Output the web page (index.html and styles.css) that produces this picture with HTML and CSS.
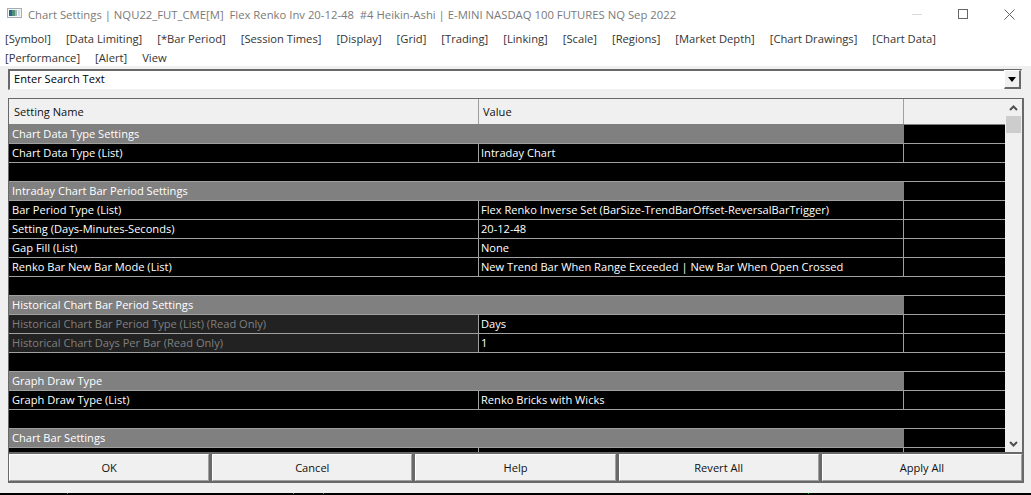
FILE: index.html
```html
<!DOCTYPE html>
<html lang="en">
<head>
<meta charset="utf-8">
<title>Chart Settings</title>
<link rel="stylesheet" href="styles.css">
</head>
<body>
<div class="window">
  <header class="titlebar">
    <svg class="app-icon" width="16" height="14" viewBox="0 0 16 14"><rect x="1.5" y="1.5" width="14" height="9" fill="#f4f6f7" stroke="#a3adb3"/><rect x="3" y="3" width="3" height="6" fill="#2f5f86"/><rect x="6" y="3" width="3" height="6" fill="#4f8f78"/><rect x="9" y="3" width="2" height="6" fill="#9ab8b4"/><rect x="12" y="3" width="2" height="6" fill="#d5dde2"/></svg>
    <span class="title">Chart Settings | NQU22_FUT_CME[M]&nbsp; Flex Renko Inv 20-12-48&nbsp; #4 Heikin-Ashi | E-MINI NASDAQ 100 FUTURES NQ Sep 2022</span>
    <div class="controls">
      <svg width="10" height="10" viewBox="0 0 10 10"><path d="M0 5.5H10" stroke="#dadada"/></svg>
      <svg width="10" height="10" viewBox="0 0 10 10"><rect x="0.5" y="0.5" width="9" height="9" fill="none" stroke="#666"/></svg>
      <svg width="11" height="11" viewBox="0 0 11 11"><path d="M0.5 0.5L10.5 10.5M10.5 0.5L0.5 10.5" stroke="#666"/></svg>
    </div>
  </header>
  <nav class="tabs">
    <span>[Symbol]</span><span>[Data Limiting]</span><span>[*Bar Period]</span><span>[Session Times]</span><span>[Display]</span><span>[Grid]</span><span>[Trading]</span><span>[Linking]</span><span>[Scale]</span><span>[Regions]</span><span>[Market Depth]</span><span>[Chart Drawings]</span><span>[Chart Data]</span><span>[Performance]</span><span>[Alert]</span><span>View</span>
  </nav>
  <main class="panel">
    <div class="search">
      <span class="search-text">Enter Search Text</span>
      <span class="drop"><svg width="8" height="5" viewBox="0 0 8 5"><path d="M0 0H8L4 5Z" fill="#000"/></svg></span>
    </div>
    <section class="gridbox">
      <div class="grid-main">
        <div class="head">
          <div class="hc c1">Setting Name</div><div class="hc c2">Value</div><div class="hc c3"></div>
        </div>
        <div class="rows">
          <div class="row group"><div class="g">Chart Data Type Settings</div><div class="c3"></div></div>
          <div class="row"><div class="c c1">Chart Data Type (List)</div><div class="c c2">Intraday Chart</div><div class="c3"></div></div>
          <div class="row"></div>
          <div class="row group"><div class="g">Intraday Chart Bar Period Settings</div><div class="c3"></div></div>
          <div class="row"><div class="c c1">Bar Period Type (List)</div><div class="c c2">Flex Renko Inverse Set (BarSize-TrendBarOffset-ReversalBarTrigger)</div><div class="c3"></div></div>
          <div class="row"><div class="c c1">Setting (Days-Minutes-Seconds)</div><div class="c c2">20-12-48</div><div class="c3"></div></div>
          <div class="row"><div class="c c1">Gap Fill (List)</div><div class="c c2">None</div><div class="c3"></div></div>
          <div class="row"><div class="c c1">Renko Bar New Bar Mode (List)</div><div class="c c2">New Trend Bar When Range Exceeded | New Bar When Open Crossed</div><div class="c3"></div></div>
          <div class="row"></div>
          <div class="row group"><div class="g">Historical Chart Bar Period Settings</div><div class="c3"></div></div>
          <div class="row"><div class="c c1 ro">Historical Chart Bar Period Type (List) (Read Only)</div><div class="c c2">Days</div><div class="c3"></div></div>
          <div class="row"><div class="c c1 ro">Historical Chart Days Per Bar (Read Only)</div><div class="c c2">1</div><div class="c3"></div></div>
          <div class="row"></div>
          <div class="row group"><div class="g">Graph Draw Type</div><div class="c3"></div></div>
          <div class="row"><div class="c c1">Graph Draw Type (List)</div><div class="c c2">Renko Bricks with Wicks</div><div class="c3"></div></div>
          <div class="row"></div>
          <div class="row group"><div class="g">Chart Bar Settings</div><div class="c3"></div></div>
          <div class="row"><div class="c c1"></div><div class="c c2"></div><div class="c3"></div></div>
        </div>
      </div>
      <div class="scroll">
        <svg width="9" height="6" viewBox="0 0 9 6"><path d="M1 5L4.5 1.5L8 5" fill="none" stroke="#505050" stroke-width="2"/></svg>
        <div class="thumb"></div>
        <div class="track"></div>
        <svg width="9" height="6" viewBox="0 0 9 6"><path d="M1 1L4.5 4.5L8 1" fill="none" stroke="#505050" stroke-width="2"/></svg>
      </div>
      <div class="buttons">
        <button>OK</button><button>Cancel</button><button>Help</button><button>Revert All</button><button>Apply All</button>
      </div>
    </section>
  </main>
  <footer class="strip"><i></i><i></i><i></i><i></i></footer>
</div>
</body>
</html>
```
FILE: styles.css
```css
* { box-sizing: border-box; }
html, body { margin: 0; padding: 0; }
body {
  width: 1031px;
  height: 495px;
  overflow: hidden;
  font-family: "Open Sans", "Noto Sans", sans-serif;
  font-size: 11.1px;
  color: #000;
}
.window { height: 495px; display: flex; flex-direction: column; background: #f0f0f0; }
.titlebar {
  height: 28px;
  background: #fff;
  display: flex;
  align-items: center;
  padding-left: 6px;
  flex: none;
}
.app-icon { flex: none; }
.title { margin-left: 6px; color: #7a7a7a; white-space: nowrap; font-size: 11.3px; }
.controls { margin-left: auto; display: flex; align-items: center; gap: 36px; padding-right: 16px; }
.tabs {
  background: #fff;
  height: 38px;
  flex: none;
  padding: 1px 40px 0 5px;
  display: flex;
  flex-wrap: wrap;
  column-gap: 15.05px;
  line-height: 19px;
  font-size: 11.2px;
  color: #333;
  align-content: flex-start;
}
.panel { flex: 1; display: flex; flex-direction: column; padding: 3px 8px 0 8px; min-height: 0; }
.search {
  width: 1014px;
  height: 21px;
  background: #fff;
  border: 1px solid #696969;
  border-right-color: #f0f0f0;
  border-bottom-color: #f0f0f0;
  border-top-width: 2px;
  border-left-width: 2px;
  display: flex;
  align-items: center;
  justify-content: space-between;
  padding-left: 4px;
  flex: none;
}
.search-text { line-height: 17px; margin-top: -3px; }
.drop {
  width: 17px;
  height: 19px;
  margin-top: -1px;
  background: #f0f0f0;
  border: 1px solid #fff;
  border-right: 2px solid #696969;
  border-bottom: 2px solid #696969;
  display: flex;
  align-items: center;
  justify-content: center;
}
.gridbox {
  margin-top: 8px;
  width: 1016px;
  height: 385px;
  border: 1px solid #696969;
  border-width: 1px 2px 2px 1px;
  display: grid;
  grid-template-columns: 996px 17px;
  grid-template-rows: 353px 29px;
  flex: none;
  background: #f0f0f0;
}
.grid-main { overflow: hidden; }
.head { display: flex; height: 26px; background: #f0f0f0; border-bottom: 1px solid #808080; }
.hc { line-height: 25px; padding-left: 5px; color: #111; }
.c1 { width: 470px; flex: none; border-right: 1px solid #a0a0a0; }
.c2 { width: 425px; flex: none; border-right: 1px solid #a0a0a0; }
.hc.c2 { padding-left: 4px; }
.c3 { flex: 1; }
.rows { background: #000; }
.row {
  display: flex;
  height: 19px;
  border-bottom: 1px solid #a0a0a0;
  color: #fff;
  line-height: 17px;
  white-space: nowrap;
}
.c { padding-left: 3px; }
.c.c2 { padding-left: 2px; }
.ro { background: #222; color: #808080; }
.g { width: 895px; flex: none; background: #808080; padding-left: 3px; }
.group .c3 { background: #000; }
.scroll {
  grid-row: 1;
  grid-column: 2;
  display: flex;
  flex-direction: column;
  align-items: center;
  background: #f0f0f0;
  padding: 6px 0 5px;
}
.thumb { width: 15px; height: 17px; background: #cdcdcd; margin-top: 5px; }
.track { flex: 1; }
.buttons {
  grid-column: 1 / -1;
  grid-row: 2;
  display: grid;
  grid-template-columns: repeat(5, 1fr);
  gap: 3px;
  background: #696969;
  padding-top: 1px;
  border-top: 1px solid #696969;
}
.buttons button {
  font: inherit;
  color: #111;
  background: #f0f0f0;
  border: 1px solid;
  border-color: #fff #a0a0a0 #a0a0a0 #fff;
  padding: 0;
  height: 27px;
}
.strip { height: 2px; background: #000; flex: none; margin-top: auto; display: flex; }
.strip i { display: block; width: 1px; height: 1px; background: #0c0; }
.strip i:nth-child(1) { margin-left: 67px; }
.strip i:nth-child(2) { margin-left: 225px; }
.strip i:nth-child(3) { margin-left: 29px; }
.strip i:nth-child(4) { margin-left: 484px; }
```
